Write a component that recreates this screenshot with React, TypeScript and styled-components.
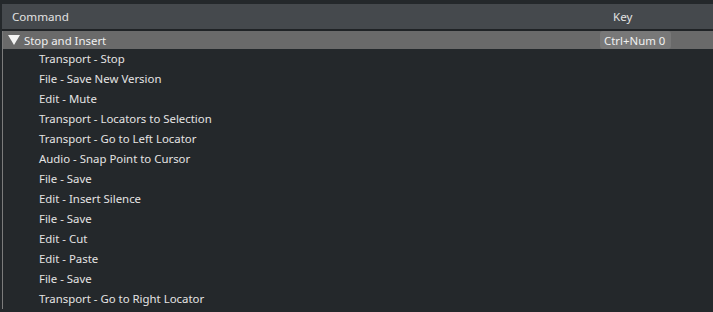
import React from 'react';
import styled, { createGlobalStyle } from 'styled-components';

const GlobalStyle = createGlobalStyle`
  html, body {
    margin: 0;
    padding: 0;
    background: #24282b;
  }
  body {
    font-family: "Noto Sans", "Open Sans", sans-serif;
  }
`;

const commands = [
  'Transport - Stop',
  'File - Save New Version',
  'Edit - Mute',
  'Transport - Locators to Selection',
  'Transport - Go to Left Locator',
  'Audio - Snap Point to Cursor',
  'File - Save',
  'Edit - Insert Silence',
  'File - Save',
  'Edit - Cut',
  'Edit - Paste',
  'File - Save',
  'Transport - Go to Right Locator',
];

export default function App() {
  return (
    <>
      <GlobalStyle />
      <Panel>
        <Header>
          <HeaderCell>Command</HeaderCell>
          <HeaderCell $key>Key</HeaderCell>
        </Header>
        <Body>
          <GroupRow>
            <GroupName>
              <Triangle width="12" height="10" viewBox="0 0 12 10">
                <polygon points="0,0 12,0 6,10" fill="#f4f4f4" />
              </Triangle>
              Stop and Insert
            </GroupName>
            <KeyBadge>Ctrl+Num 0</KeyBadge>
          </GroupRow>
          {commands.map((c, i) => (
            <Row key={i}>{c}</Row>
          ))}
        </Body>
      </Panel>
    </>
  );
}

const Panel = styled.div`
  width: 713px;
  height: 312px;
  overflow: hidden;
  padding-top: 4px;
  box-sizing: border-box;
  background: #24282b;
`;

const Header = styled.div`
  margin-left: 2px;
  height: 25px;
  background: #45494d;
  display: flex;
  align-items: center;
  border-bottom: 2px solid #202326;
`;

const HeaderCell = styled.div<{ $key?: boolean }>`
  color: #e2e2e2;
  font-size: 11.6px;
  white-space: nowrap;
  ${(p) => (p.$key ? 'margin-left: auto; width: 100px;' : 'padding-left: 10px;')}
`;

const Body = styled.div`
  margin-left: 2px;
  border-left: 1px solid #7c7c7c;
`;

const GroupRow = styled.div`
  height: 18px;
  background: #6a6a6a;
  display: flex;
  align-items: center;
`;

const GroupName = styled.div`
  flex: 1;
  display: flex;
  align-items: center;
  color: #f0f0f0;
  font-size: 11.4px;
  padding-left: 5px;
  white-space: nowrap;
`;

const Triangle = styled.svg`
  margin-right: 4px;
  flex-shrink: 0;
`;

const KeyBadge = styled.div`
  height: 18px;
  margin-right: 42px;
  box-sizing: border-box;
  padding: 0 4px;
  min-width: 71px;
  background: #787878;
  border-radius: 3px;
  color: #f0f0f0;
  font-size: 11.4px;
  white-space: nowrap;
  display: flex;
  align-items: center;
`;

const Row = styled.div`
  height: 20px;
  display: flex;
  align-items: center;
  padding-left: 36px;
  padding-bottom: 1px;
  box-sizing: border-box;
  color: #e4e4e4;
  font-size: 11.4px;
  white-space: nowrap;
`;
